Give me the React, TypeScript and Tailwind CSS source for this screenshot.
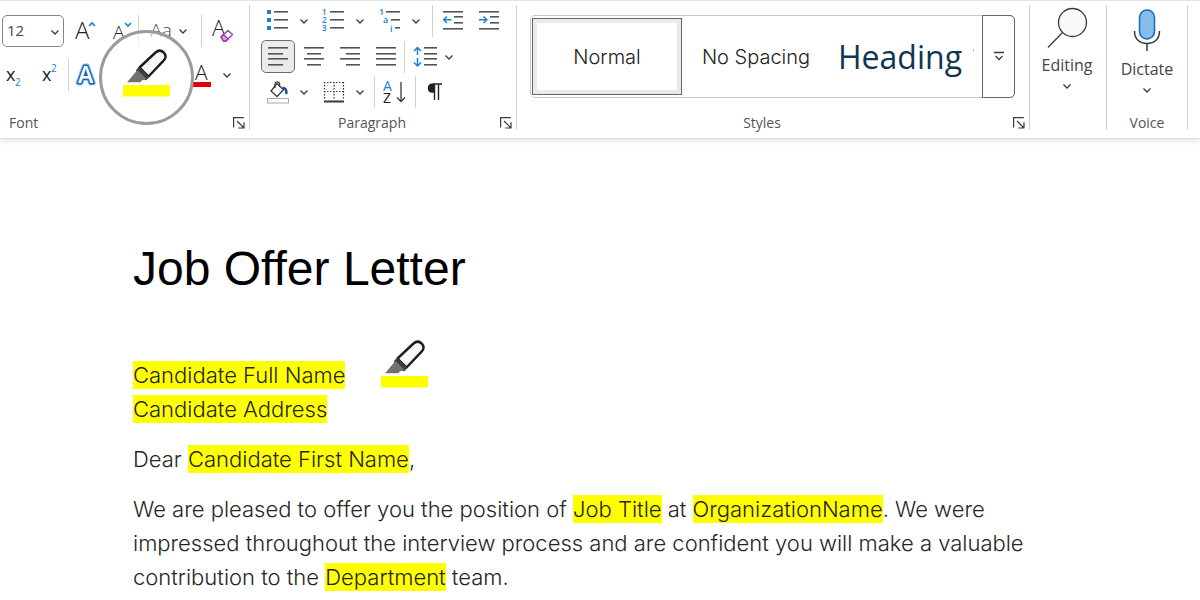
import type { ReactNode } from 'react';

const INK = '#3b3a39';
const BLUE = '#1b7fd0';

function Chevron() {
  return (
    <svg width="10" height="10" viewBox="0 0 10 10" fill="none" stroke={INK} strokeWidth="1.3">
      <path d="M1.5 3.5 5 7l3.5-3.5" />
    </svg>
  );
}

function Tool({ label, children }: { label: string; children: ReactNode }) {
  return (
    <button aria-label={label} className="flex h-8 w-9 shrink-0 items-center justify-center rounded hover:bg-gray-100">
      {children}
    </button>
  );
}

function More({ label }: { label: string }) {
  return (
    <button aria-label={label} className="flex h-8 w-4 shrink-0 items-center justify-center rounded hover:bg-gray-100">
      <Chevron />
    </button>
  );
}

function Divider() {
  return <span className="h-8 w-px shrink-0 bg-[#d2d2d2]" />;
}

function Launcher({ label }: { label: string }) {
  return (
    <button aria-label={label} className="mr-1 shrink-0">
      <svg width="12" height="12" viewBox="0 0 12 12" fill="none" stroke={INK} strokeWidth="1.2">
        <path d="M.6 10.5V.6h10.2M4 4l6.5 6.5M11 5.2V11H5.2" />
      </svg>
    </button>
  );
}

type Bar = [x: number, y: number, w: number];

function Bars({ bars, children }: { bars: Bar[]; children?: ReactNode }) {
  return (
    <svg width="24" height="24" viewBox="0 0 24 24" className="overflow-visible">
      {bars.map(([x, y, w]) => (
        <rect key={`${x}-${y}`} x={x} y={y} width={w} height="1.6" fill="#555" />
      ))}
      {children}
    </svg>
  );
}

function Highlighter() {
  return (
    <svg width="47" height="48" viewBox="0 0 47 48">
      <path d="M4 33.2 14 21.5l9 9-4 .7-1.500 2z" fill="#73716e" />
      <path
        d="M16.500 18.500 32.500 3.500c2.800-2.400 6-2.200 8.300.1 2.300 2.400 2.200 5.400-.2 8L25.500 27.500z"
        fill="#f7f7f7"
        stroke="#1d1d1d"
        strokeWidth="2.400"
        strokeLinejoin="round"
      />
      <path d="M16 17.500 26.500 28l-3.500 3.500L12.800 21.500z" fill="#3f3e3c" />
      <path d="M14.500 21 23 29.500l-3 1.700L13 24z" fill="#73716e" />
      <path d="M0 36h47v11.500H0z" fill="#ffff00" />
    </svg>
  );
}

function Mark({ children }: { children: ReactNode }) {
  return <mark className="bg-[#ffff00] py-px text-inherit">{children}</mark>;
}

function FontGroup() {
  return (
    <section className="relative flex w-[250px] shrink-0 flex-col border-r border-[#d2d2d2]">
      <div className="mt-2.5 flex h-8 items-center pl-0.5">
        <div className="relative mr-0.5 h-8 w-[62px] shrink-0">
          <select
            aria-label="Font size"
            defaultValue="12"
            className="h-full w-full appearance-none rounded-[5px] border border-[#8a8886] bg-white pl-1 text-[15px] text-[#444]"
          >
            <option>11</option>
            <option>12</option>
            <option>14</option>
          </select>
          <span className="pointer-events-none absolute right-1 top-3">
            <Chevron />
          </span>
        </div>
        <Tool label="Grow font">
          <svg width="26" height="26" viewBox="0 0 26 26" fill="none" className="overflow-visible">
            <text x="4" y="21" fontSize="24" fontWeight="300" fill="#222">A</text>
            <path d="m18 8 3-3 3 3" stroke={BLUE} strokeWidth="1.6" />
          </svg>
        </Tool>
        <Tool label="Shrink font">
          <svg width="26" height="26" viewBox="0 0 26 26" fill="none" className="overflow-visible">
            <text x="6" y="21" fontSize="19" fontWeight="300" fill="#222">A</text>
            <path d="m18 5 3 3 3-3" stroke={BLUE} strokeWidth="1.6" />
          </svg>
        </Tool>
        <Divider />
        <button aria-label="Change case" className="ml-2 flex h-8 w-7 items-center justify-center text-[19px] font-light text-[#444]">
          Aa
        </button>
        <More label="Case options" />
        <span className="w-2.5" />
        <Divider />
        <Tool label="Clear formatting">
          <svg width="26" height="26" viewBox="0 0 26 26" fill="none" className="overflow-visible">
            <text x="5" y="18" fontSize="22" fontWeight="300" fill="#222">A</text>
            <path d="m14 19 7-6.500 4.500 4L19 23h-2.500z" fill="#fff" stroke="#9b2fae" strokeWidth="1.300" strokeLinejoin="round" />
            <path d="m14 19 2.500-2.200 4.500 4L19 23h-2.500z" fill="#d9a6e2" stroke="#9b2fae" strokeWidth="1.300" strokeLinejoin="round" />
          </svg>
        </Tool>
      </div>

      <div className="mt-3 flex h-8 items-center">
        <button aria-label="Subscript" className="h-8 w-8 pl-1">
          <svg width="20" height="26" viewBox="0 0 20 26" className="overflow-visible">
            <text x="2" y="19" fontSize="18" fontWeight="500" fill="#222">x</text>
            <text x="11" y="24" fontSize="10" fill={BLUE}>2</text>
          </svg>
        </button>
        <Tool label="Superscript">
          <svg width="20" height="26" viewBox="0 0 20 26" className="overflow-visible">
            <text x="2" y="19" fontSize="18" fontWeight="500" fill="#222">x</text>
            <text x="11" y="10" fontSize="10" fill={BLUE}>2</text>
          </svg>
        </Tool>
        <Divider />
        <Tool label="Text effects">
          <svg width="26" height="26" viewBox="0 0 26 26" strokeLinejoin="round" className="overflow-visible">
            <text x="4" y="21" fontSize="23" fontWeight="600" fill="#9bcbf2" stroke="#9bcbf2" strokeWidth="5">A</text>
            <text x="4" y="21" fontSize="23" fontWeight="600" fill="#fff" stroke="#1b62b5" strokeWidth="3" paintOrder="stroke">A</text>
          </svg>
        </Tool>
        <span className="flex-1" />
        <Tool label="Font color">
          <svg width="20" height="26" viewBox="0 0 20 26" className="overflow-visible">
            <text x="4" y="18" fontSize="21" fontWeight="300" fill="#222">A</text>
            <path d="M1 20h19v5H1z" fill="#e80000" />
          </svg>
        </Tool>
        <More label="Font color options" />
        <span className="w-3.5" />
      </div>

      <button
        aria-label="Text highlight color"
        className="absolute left-[99px] top-[25px] flex size-[95px] items-center justify-center rounded-full border-[3px] border-[#9b9b9b] bg-linear-to-b from-white/50 to-white to-30%"
      >
        <span className="-mt-2.5">
          <Highlighter />
        </span>
      </button>

      <footer className="mt-auto flex h-3.5 items-center justify-between pl-[9px]">
        <h2>Font</h2>
        <Launcher label="Font settings" />
      </footer>
    </section>
  );
}

function ParagraphGroup() {
  return (
    <section className="flex w-[267px] shrink-0 flex-col border-r border-[#d2d2d2]">
      <div className="flex h-[31px] items-center pl-2.5">
        <Tool label="Bullets">
          <Bars bars={[[8, 2, 14], [8, 10, 14], [8, 18, 14]]}>
            <path d="M1 1h4v4H1zM1 9h4v4H1zM1 17h4v4H1z" fill={BLUE} />
          </Bars>
        </Tool>
        <More label="Bullet options" />
        <span className="w-1" />
        <Tool label="Numbering">
          <Bars bars={[[8, 2, 14], [8, 10, 14], [8, 18, 14]]}>
            <g fill={BLUE} fontSize="8" fontWeight="600">
              <text x="0" y="6">1</text>
              <text x="0" y="14">2</text>
              <text x="0" y="22">3</text>
            </g>
          </Bars>
        </Tool>
        <More label="Numbering options" />
        <span className="w-1" />
        <Tool label="Multilevel list">
          <Bars bars={[[8, 2, 14], [13, 10, 9], [17, 18, 5]]}>
            <g fill={BLUE} fontSize="9" fontWeight="600">
              <text x="1" y="6">1</text>
              <text x="5" y="14">a</text>
              <text x="12" y="23">i</text>
            </g>
          </Bars>
        </Tool>
        <More label="Multilevel options" />
        <span className="w-2" />
        <Divider />
        <span className="w-0.5" />
        <Tool label="Decrease indent">
          <Bars bars={[[2, 2, 20], [13, 7, 9], [13, 13, 9], [2, 19, 20]]}>
            <path d="M10.500 10.800H3M6 7.500l-3.300 3.300L6 14" fill="none" stroke={BLUE} strokeWidth="1.500" />
          </Bars>
        </Tool>
        <Tool label="Increase indent">
          <Bars bars={[[2, 2, 20], [13, 7, 9], [13, 13, 9], [2, 19, 20]]}>
            <path d="M2 10.800h7.500M6.500 7.500l3.300 3.300L6.500 14" fill="none" stroke={BLUE} strokeWidth="1.500" />
          </Bars>
        </Tool>
      </div>

      <div className="mt-1 flex h-[33px] items-center pl-2.5">
        <button
          aria-label="Align left"
          aria-pressed="true"
          className="mx-px flex h-[33px] w-[34px] items-center justify-center rounded-[5px] border border-[#6b6b6b] bg-[#ebebeb]"
        >
          <Bars bars={[[2, 2, 20], [2, 8, 15], [2, 13, 20], [2, 19, 15]]} />
        </button>
        <Tool label="Center">
          <Bars bars={[[2, 2, 20], [5, 8, 14], [2, 13, 20], [5, 19, 14]]} />
        </Tool>
        <Tool label="Align right">
          <Bars bars={[[2, 2, 20], [8, 8, 14], [2, 13, 20], [8, 19, 14]]} />
        </Tool>
        <Tool label="Justify">
          <Bars bars={[[2, 2, 20], [2, 8, 20], [2, 13, 20], [2, 19, 20]]} />
        </Tool>
        <Divider />
        <Tool label="Line spacing">
          <Bars bars={[[13, 2, 13], [13, 8, 13], [13, 13, 13], [13, 19, 13]]}>
            <path d="M6.500 10V3M3 6l3.500-3.500L10 6M6.500 13v8M3 17.500 6.500 21l3.500-3.500" fill="none" stroke={BLUE} strokeWidth="1.500" />
          </Bars>
        </Tool>
        <More label="Spacing options" />
      </div>

      <div className="mt-[3px] flex h-8 items-center pl-2.5">
        <Tool label="Shading">
          <svg width="24" height="24" viewBox="0 0 24 24" fill="none" stroke={INK} strokeWidth="1.300">
            <path d="m11 3.500 6.500 6.300-6.500 6.700L5 11z" />
            <path d="M9 8V3.500C9 1.500 13 1 13.500 3.500V7" />
            <path d="M16.500 8c3-.5 4.300 2 3.800 6" stroke="#184f95" strokeWidth="2.500" />
            <rect x="1.500" y="18.500" width="21" height="4.500" stroke="#aaa" strokeWidth="1" fill="#fff" />
          </svg>
        </Tool>
        <More label="Shading options" />
        <span className="w-1" />
        <Tool label="Borders">
          <svg width="24" height="24" viewBox="0 0 24 24" fill="none" stroke={INK} strokeWidth="1.200">
            <path d="M2.500 2v18M21.500 2v18M12 2v18M2 2.500h20M2 11.500h20" strokeDasharray="1.500 1.500" />
            <path d="M2 21.500h20" strokeWidth="2" />
          </svg>
        </Tool>
        <More label="Border options" />
        <span className="w-1.5" />
        <Divider />
        <Tool label="Sort">
          <svg width="24" height="26" viewBox="0 0 24 26" fill="none" className="overflow-visible">
            <text x="2" y="12" fontSize="14" fontWeight="500" fill={BLUE}>A</text>
            <text x="2" y="24" fontSize="14" fontWeight="500" fill="#222">Z</text>
            <path d="M20 3v19.500M16 18.500l4 4 4-4" stroke={INK} strokeWidth="1.300" />
          </svg>
        </Tool>
        <span className="w-1" />
        <Divider />
        <Tool label="Show formatting marks">
          <svg width="16" height="20" viewBox="0 0 16 20" fill="none" stroke="#222" strokeWidth="1.400">
            <path d="M8 2.200H6.500C4 2.200 2.500 4 2.500 6.200S4 10 6.500 10H8z" fill="#222" />
            <path d="M7 2h9M8.500 2v16M12.500 2v16" />
          </svg>
        </Tool>
      </div>

      <footer className="mt-auto flex h-3.5 items-center">
        <h2 className="flex-1 pr-1.5 text-center">Paragraph</h2>
        <Launcher label="Paragraph settings" />
      </footer>
    </section>
  );
}

function StylesGroup() {
  return (
    <section className="flex min-w-0 flex-1 flex-col border-r border-[#d2d2d2]">
      <div className="ml-[13px] mr-3.5 mt-2.5 flex h-[83px] rounded-[5px] border border-[#c8c8c8] font-[Inter,sans-serif] font-light text-[#222]">
        <button className="my-0.5 ml-px w-[150px] shrink-0 border border-[#666] bg-white text-xl shadow-[inset_0_0_0_4px_#eaeaea]">
          Normal
        </button>
        <button className="w-[148px] shrink-0 text-xl">No Spacing</button>
        <button className="min-w-0 flex-1 overflow-hidden whitespace-nowrap pl-2 text-left font-['Open_Sans',sans-serif] text-[32px] font-normal text-[#0f3552]">
          Heading 1
        </button>
        <button
          aria-label="More styles"
          className="-my-px -mr-px ml-2 flex w-[33px] shrink-0 items-center justify-center rounded-r-[5px] border border-[#666]"
        >
          <svg width="12" height="12" viewBox="0 0 12 12" fill="none" stroke={INK} strokeWidth="1.300">
            <path d="M1 1.500h10M2.500 5 6 8.500 9.500 5" />
          </svg>
        </button>
      </div>
      <footer className="mt-auto flex h-3.5 items-center">
        <h2 className="flex-1 pr-1.5 text-center">Styles</h2>
        <Launcher label="Styles settings" />
      </footer>
    </section>
  );
}

export default function App() {
  return (
    <div className="min-h-screen bg-white font-['Open_Sans',sans-serif]">
      <header className="border-b border-t border-[#e2e2e2] pb-2 pt-1 text-sm text-[#555] shadow-[0_2px_5px_rgba(0,0,0,0.1)]">
        <div className="flex h-[125px]">
          <FontGroup />
          <ParagraphGroup />
          <StylesGroup />
          <section className="flex w-[77px] shrink-0 flex-col border-r border-[#d2d2d2]">
            <button className="flex flex-col items-center pr-0.5 pt-0.5 text-base text-[#444]">
              <svg width="42" height="42" viewBox="0 0 42 42" fill="#fafafa" stroke={INK} strokeWidth="1.300">
                <circle cx="26.500" cy="15.500" r="14" />
                <path d="M16.500 25.500 2 40.500" />
              </svg>
              <span className="mt-1 leading-6">Editing</span>
              <span className="mt-1">
                <Chevron />
              </span>
            </button>
          </section>
          <section className="flex w-[81px] shrink-0 flex-col border-r border-[#d2d2d2]">
            <button className="flex flex-col items-center pt-1 text-base text-[#444]">
              <svg width="28" height="44" viewBox="0 0 28 44" fill="none">
                <path d="M1.500 22c0 8 5 12.500 12.500 12.500S26.500 30 26.500 22M14 34.500V42" stroke={INK} strokeWidth="1.500" />
                <rect x="6.500" y="1" width="15" height="29" rx="7.500" fill="#86bdeb" stroke="#1767bd" strokeWidth="1.500" />
              </svg>
              <span className="mt-1 leading-6">Dictate</span>
              <span className="mt-1">
                <Chevron />
              </span>
            </button>
            <footer className="mt-auto flex h-3.5 items-center">
              <h2 className="flex-1 text-center">Voice</h2>
            </footer>
          </section>
          <span className="w-3" />
        </div>
      </header>

      <main className="px-[133px] pb-1 pt-[100px] font-[Inter,sans-serif] text-[22px] font-light leading-[34px] text-[#262626]">
        <h1 className="font-['Liberation_Sans',Arial,sans-serif] text-5xl font-normal leading-[60px] text-black">
          Job Offer Letter
        </h1>
        <div className="mt-[59px] flex items-start">
          <p>
            <Mark>Candidate Full Name</Mark>
            <br />
            <Mark>Candidate Address</Mark>
          </p>
          <span className="-mt-[18px] ml-9">
            <Highlighter />
          </span>
        </div>
        <p className="mt-4">
          Dear <Mark>Candidate First Name</Mark>,
        </p>
        <p className="mt-4">
          We are pleased to offer you the position of <Mark>Job Title</Mark> at <Mark>OrganizationName</Mark>. We were
          impressed throughout the interview process and are confident you will make a valuable contribution to the{' '}
          <Mark>Department</Mark> team.
        </p>
      </main>
    </div>
  );
}
